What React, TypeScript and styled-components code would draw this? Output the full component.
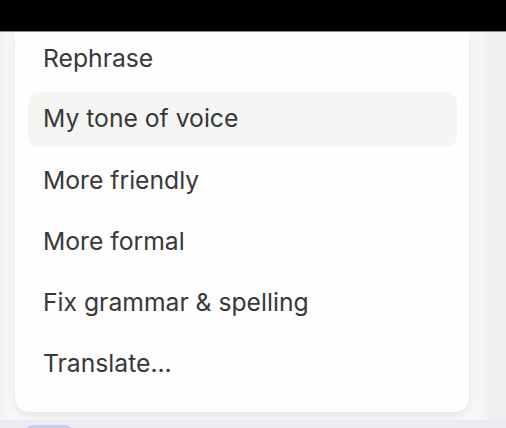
import React from 'react'
import styled, { createGlobalStyle } from 'styled-components'

const GlobalStyle = createGlobalStyle`
  html, body {
    margin: 0;
    padding: 0;
    height: 100%;
    overflow: hidden;
  }
  #root {
    height: 100%;
  }
`

const items = [
  'Rephrase',
  'My tone of voice',
  'More friendly',
  'More formal',
  'Fix grammar & spelling',
  'Translate...',
]

const App = () => {
  return (
    <Page>
      <GlobalStyle />
      <TopBar />
      <Stage>
        <Menu>
          {items.map((label, i) => (
            <Item key={label} $active={i === 1}>
              {label}
            </Item>
          ))}
        </Menu>
        <Composer>
          <Chip />
        </Composer>
      </Stage>
    </Page>
  )
}

export default App

const Page = styled.div`
  width: 506px;
  height: 428px;
  display: flex;
  flex-direction: column;
  font-family: Inter, "Noto Sans", sans-serif;
  background: #f4f4f6;
`

const TopBar = styled.div`
  height: 31px;
  flex-shrink: 0;
  background: #000;
  border-bottom: 1px solid #8a8a8c;
`

const Stage = styled.div`
  flex: 1;
  display: flex;
  flex-direction: column;
  padding: 0 37px 0 15px;
  background: linear-gradient(to right, #f1f1f3 0px, #fafafa 14px, #fafafa 470px, #f0f0f2 490px);
  overflow: hidden;
`

const Menu = styled.div`
  display: flex;
  flex-direction: column;
  gap: 6px;
  padding: 0 12px 20px 13px;
  background: #fefefe;
  border-radius: 0 0 14px 14px;
  box-shadow: 0 4px 10px rgba(40, 40, 60, 0.1);
`

const Item = styled.div<{ $active?: boolean }>`
  height: 55px;
  box-sizing: border-box;
  display: flex;
  align-items: center;
  padding: 0 0 3px 15px;
  margin-top: ${(p) => (p.$active ? '-1px' : '0')};
  margin-bottom: ${(p) => (p.$active ? '1px' : '0')};
  border-radius: 11px;
  font-size: 24.7px;
  color: #383838;
  background: ${(p) => (p.$active ? '#f5f5f3' : 'transparent')};
`

const Composer = styled.div`
  margin-top: 8px;
  margin-left: -15px;
  margin-right: -37px;
  height: 30px;
  background: #ebecf3;
  padding-left: 25px;
`

const Chip = styled.div`
  width: 48px;
  height: 20px;
  margin-top: 5px;
  border-radius: 8px;
  background: #c9cbee;
`
